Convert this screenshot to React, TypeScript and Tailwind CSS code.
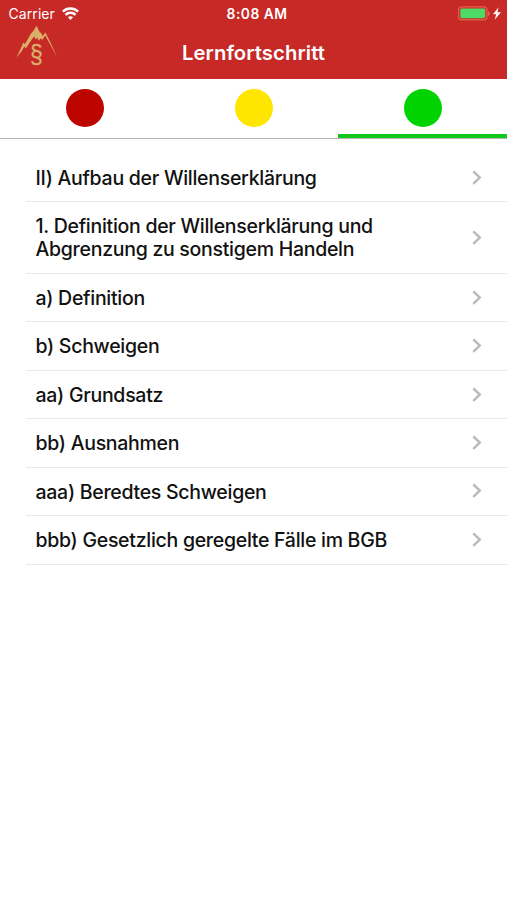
import React, { useState } from 'react';
import clsx from 'clsx';

interface Topic {
  title: string;
  tall?: boolean;
}

const topics: Topic[] = [
  { title: 'II) Aufbau der Willenserklärung' },
  { title: '1. Definition der Willenserklärung und Abgrenzung zu sonstigem Handeln', tall: true },
  { title: 'a) Definition' },
  { title: 'b) Schweigen' },
  { title: 'aa) Grundsatz' },
  { title: 'bb) Ausnahmen' },
  { title: 'aaa) Beredtes Schweigen' },
  { title: 'bbb) Gesetzlich geregelte Fälle im BGB' },
];

const tabs = [
  { id: 'red', dot: 'bg-[#bd0500]', bar: 'border-[#bd0500]' },
  { id: 'yellow', dot: 'bg-[#ffe600]', bar: 'border-[#ffe600]' },
  { id: 'green', dot: 'bg-[#00d300]', bar: 'border-[#14c81b]' },
];

function WifiIcon() {
  return (
    <svg className="w-[17px] h-[13px]" viewBox="0 0 17 13" fill="none" stroke="white" strokeWidth="2.5">
      <path d="M0.9 4.7a10.8 10.8 0 0 1 15.2 0" />
      <path d="M3.5 7.9a7 7 0 0 1 10 0" />
      <path d="M8.5 12.9L5.9 10.3a3.9 3.9 0 0 1 5.2 0z" fill="white" stroke="none" />
    </svg>
  );
}

function BatteryIcon() {
  return (
    <svg className="w-[44px] h-[15px]" viewBox="0 0 44 15">
      <rect x="0.7" y="0.9" width="28.2" height="13" rx="3.2" fill="none" stroke="#e8604c" strokeWidth="1.2" />
      <rect x="2.4" y="2.6" width="24.8" height="9.6" rx="1.4" fill="#4cd964" />
      <path d="M30.3 5.2c1.7.6 1.7 4 0 4.6z" fill="#e8806c" />
      <path d="M40.6 1.2L35 8.2h3.3l-1.7 5.6 6.4-7.6h-3.6z" fill="white" />
    </svg>
  );
}

function Logo() {
  return (
    <svg className="w-[42px] h-[44px]" viewBox="0 0 42 44">
      <path
        d="M0.5 32.8L5.6 21.4l1.8-3.8 1.6 1.4L15.2 8.2l1.8-1.6L20.5 0.8l3.3 6.4 1.4.8 1.4 3 2.8-3.6 4.2 8.4 7.8 17-9.4-17.2-2.8-5-2.8 4.2-2.1-1.2-1.3 2.2-1.8-3-1.4 1.6-1.5-2.8-2 2.2-6.4 9.4-1.7-1.4-2.4 4.2z"
        fill="#dbae67"
      />
      <text
        x="20.4"
        y="34.4"
        textAnchor="middle"
        fill="#dbae67"
        stroke="#dbae67"
        strokeWidth="0.25"
        transform="scale(1 1.1)"
        className="font-['Liberation_Sans',sans-serif] text-[23px]"
      >
        §
      </text>
    </svg>
  );
}

function StatusBar() {
  return (
    <div className="grid grid-cols-3 items-center h-[27px] text-white">
      <div className="flex items-center gap-[7px] pl-[8.5px]">
        <span className="text-[14px] leading-5 tracking-[0.08px]">Carrier</span>
        <WifiIcon />
      </div>
      <span className="text-center text-[13.8px] leading-5 font-semibold tracking-[0.5px] pl-[7px]">8:08 AM</span>
      <div className="flex justify-end pr-[5px]">
        <BatteryIcon />
      </div>
    </div>
  );
}

function ChevronIcon() {
  return (
    <svg className="w-[10px] h-[16px] shrink-0" viewBox="0 0 10 16" fill="none" stroke="#b9b9bc" strokeWidth="2.4">
      <path d="M1.3 1.4L7.8 7.6l-6.5 6.2" />
    </svg>
  );
}

export default function App() {
  const [active, setActive] = useState('green');

  return (
    <div className="w-full h-screen flex flex-col bg-white overflow-hidden font-['Inter','Liberation_Sans',sans-serif]">
      <header className="h-[79px] shrink-0 bg-[#c72927]">
        <StatusBar />
        <div className="grid grid-cols-[1fr_auto_1fr] h-[52px] text-white">
          <div className="pl-4 -mt-[2px]">
            <Logo />
          </div>
          <h1 className="text-[20.3px] leading-6 font-semibold pt-[14px] tracking-[0.08px]">Lernfortschritt</h1>
        </div>
      </header>

      <nav className="grid grid-cols-3 h-[60px] shrink-0 border-b border-[#b5b5b5]">
        {tabs.map((tab) => (
          <button
            key={tab.id}
            onClick={() => setActive(tab.id)}
            className={clsx(
              'flex justify-center pt-[10px] border-b-4',
              active === tab.id ? tab.bar : 'border-transparent'
            )}
          >
            <span className={clsx('w-[38px] h-[38px] rounded-full', tab.dot)} />
          </button>
        ))}
      </nav>

      <ul className="pt-[15px] pl-[26px]">
        {topics.map((topic) => (
          <li
            key={topic.title}
            className={clsx(
              'flex items-center justify-between pl-[9.5px] pr-[25px] border-b border-[#e9e9eb]',
              topic.tall ? 'h-[71.5px]' : 'h-[48.45px]'
            )}
          >
            <span className="w-[370px] pt-[1.2px] text-[19.5px] leading-[23px] font-medium tracking-[-0.28px] text-[#111]">
              {topic.title}
            </span>
            <ChevronIcon />
          </li>
        ))}
      </ul>
    </div>
  );
}
